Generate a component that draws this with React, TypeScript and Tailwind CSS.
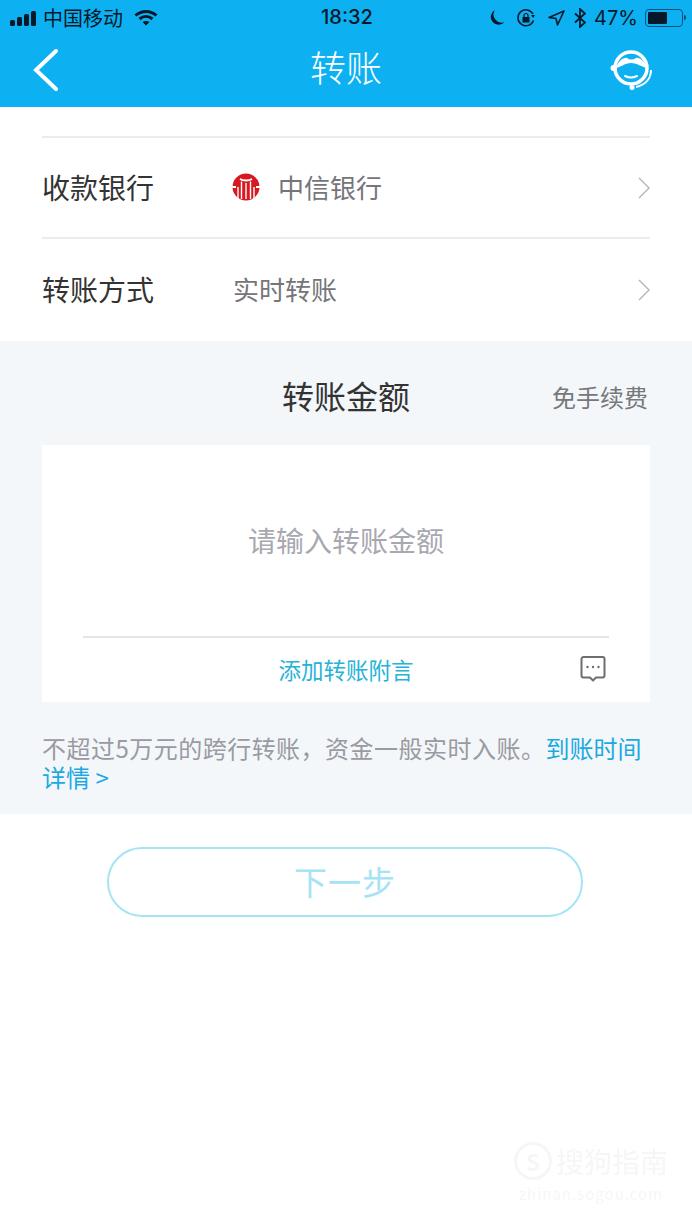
const CJK = "font-['Noto_Sans_CJK_SC','Noto_Sans',sans-serif]";

function Chevron() {
  return (
    <svg width="14" height="24" viewBox="0 0 14 24" fill="none" stroke="#b4b4b8" strokeWidth="1.4" className="ml-auto translate-x-[1px] translate-y-[1px]">
      <path d="M2 2l10 10L2 22" />
    </svg>
  );
}

function StatusBar() {
  return (
    <div className="relative flex h-[35px] items-center pl-[10px] pr-[6px] text-[#06192b]">
      <svg width="28" height="16" viewBox="0 0 28 16" fill="currentColor">
        <rect x="0" y="10" width="5" height="6" rx="1.5" />
        <rect x="7" y="7" width="5" height="9" rx="1.5" />
        <rect x="14" y="4" width="5" height="12" rx="1.5" />
        <rect x="21" y="1" width="5" height="15" rx="1.5" />
      </svg>
      <span className="ml-[5px] text-[20px] leading-none">中国移动</span>
      <svg width="24" height="17" viewBox="0 0 24 17" className="ml-[11px]" fill="none" stroke="currentColor" strokeWidth="3">
        <path d="M1.5 6.500C7.500 1 16.500 1 22.500 6.500" />
        <path d="M5.500 10C9.500 6.500 14.500 6.500 18.500 10" />
        <path d="M12 16.500l-3.500-3.500c2-1.500 5-1.500 7 0z" fill="currentColor" stroke="none" />
      </svg>
      <span className="absolute left-[321px] top-[5px] font-['Inter',sans-serif] text-[20px] font-medium leading-[24px]">18:32</span>
      <div className="ml-auto flex items-center">
        <svg width="16" height="17" viewBox="0 0 16 17" fill="currentColor">
          <path d="M6 1a8 8 0 0 0 9.500 12A7.800 7.800 0 1 1 6 1z" />
        </svg>
        <svg width="20" height="20" viewBox="0 0 20 20" className="ml-[11px]" fill="none" stroke="currentColor" strokeWidth="1.5">
          <path d="M17.500 12.500A8 8 0 1 1 17 6" />
          <path d="M15 7h4l-2 3z" fill="currentColor" stroke="none" />
          <rect x="6.500" y="9" width="7" height="5.500" fill="currentColor" stroke="none" />
          <path d="M8 9V7.500a2 2 0 0 1 4 0V9" strokeWidth="1.2" />
        </svg>
        <svg width="17" height="16" viewBox="0 0 17 16" className="ml-[12px]" fill="none" stroke="currentColor" strokeWidth="1.6" strokeLinejoin="round">
          <path d="M16 1L1 7.500l7 1 1.500 6.500z" />
        </svg>
        <svg width="12" height="20" viewBox="0 0 12 20" className="ml-[9px]" fill="none" stroke="currentColor" strokeWidth="1.8">
          <path d="M1 5.500l10 9L6 19V1l5 4.500-10 9" />
        </svg>
        <span className="ml-[8px] font-['Inter',sans-serif] text-[20px] leading-none">47%</span>
        <div className="ml-[7px] flex h-[18px] w-[38px] items-center rounded-[4px] border border-[#0a4f78] p-[2px]">
          <div className="h-full w-[19px] rounded-[1px] bg-[#06192b]" />
        </div>
        <div className="ml-px h-[5px] w-[2px] rounded-r-sm bg-[#0a4f78]" />
      </div>
    </div>
  );
}

function NavBar() {
  return (
    <div className="relative flex h-[72px] items-start justify-center">
      <svg width="28" height="44" viewBox="0 0 28 44" fill="none" stroke="white" strokeWidth="4" strokeLinecap="round" className="absolute left-[32px] top-[13px]">
        <path d="M24 3L4 22l20 19" />
      </svg>
      <span className="mt-[9px] text-[36px] font-light leading-[44px] text-white">转账</span>
      <svg width="44" height="44" viewBox="0 0 44 44" fill="none" stroke="white" className="absolute left-[610px] top-[13px]">
        <circle cx="21" cy="20" r="16" strokeWidth="3.5" />
        <path d="M6 20c2-7 8-11 11-10 3 2 6 2 9 0 3-1 9 3 11 10-5-1-10-5-16-5S11 19 6 20z" fill="white" stroke="none" />
        <path d="M15 28c4 2 8 2 12 0" strokeWidth="2" strokeLinecap="round" />
        <path d="M41 22c0 9-6 15-15 17" strokeWidth="2" />
        <circle cx="22" cy="39.500" r="2.500" fill="white" stroke="none" />
        <circle cx="3.500" cy="20" r="3" fill="white" stroke="none" />
      </svg>
    </div>
  );
}

function BankLogo() {
  return (
    <svg width="28" height="28" viewBox="0 0 28 28" className="shrink-0 -translate-x-[1px]">
      <circle cx="14" cy="14" r="13.500" fill="#d81920" />
      <path d="M9.500 26V8.500M14 26V10M18.500 26V8.500M6 26V14M22 26V14" stroke="white" strokeWidth="1.4" fill="none" />
      <path d="M8 6c3 2 9 2 12 0" stroke="white" strokeWidth="1.8" fill="none" />
      <path d="M0 14h4M24 14h4" stroke="white" strokeWidth="2" fill="none" />
    </svg>
  );
}

export default function App() {
  return (
    <div className={`${CJK} relative flex h-[1230px] w-[692px] flex-col overflow-hidden bg-white`}>
      <header className="h-[107px] shrink-0 bg-[#0db1f2]">
        <StatusBar />
        <NavBar />
      </header>

      <section className="mx-[42px] mt-[29px] shrink-0 border-t-2 border-[#ececec]">
        <div className="flex h-[101px] items-center border-b-2 border-[#ececec] pb-[2px]">
          <span className="w-[191px] text-[28px] text-[#333333]">收款银行</span>
          <BankLogo />
          <span className="ml-[17px] text-[26px] text-[#75757a]">中信银行</span>
          <Chevron />
        </div>
        <div className="flex h-[102px] items-center pb-[3px]">
          <span className="w-[191px] text-[28px] text-[#333333]">转账方式</span>
          <span className="text-[26px] text-[#75757a]">实时转账</span>
          <Chevron />
        </div>
      </section>

      <section className="flex h-[473px] shrink-0 flex-col bg-[#f3f7fa] px-[42px]">
        <div className="relative flex h-[104px] shrink-0 items-center justify-center pt-[4px]">
          <span className="text-[32px] text-[#333333]">转账金额</span>
          <span className="absolute right-[2px] top-[36px] text-[24px] leading-[40px] text-[#77777c]">免手续费</span>
        </div>
        <div className="flex h-[257px] shrink-0 flex-col bg-white px-[41px]">
          <div className="flex h-[193px] shrink-0 items-center justify-center border-b-2 border-[#e6e6e6] pb-[1px] text-[28px] text-[#a8a8b0]">
            请输入转账金额
          </div>
          <div className="relative flex flex-1 items-center justify-center">
            <span className="text-[22.5px] text-[#25b3d8]">添加转账附言</span>
            <svg width="28" height="28" viewBox="0 0 28 28" fill="none" stroke="#6e6e72" strokeWidth="2" className="absolute right-[2px] top-[17px]">
              <path d="M4.500 2h19a2 2 0 0 1 2 2v16.500a2 2 0 0 1-2 2H17L14 25.500 11 22.500H4.500a2 2 0 0 1-2-2V4a2 2 0 0 1 2-2z" strokeLinejoin="round" />
              <circle cx="8.500" cy="12" r="1.200" fill="#6e6e72" stroke="none" />
              <circle cx="14" cy="12" r="1.200" fill="#6e6e72" stroke="none" />
              <circle cx="19.500" cy="12" r="1.200" fill="#6e6e72" stroke="none" />
            </svg>
          </div>
        </div>
        <p className="mt-[31px] text-[24px] leading-[29px] text-[#9a9aa2]">
          <span className="tracking-[0.48px]">不超过5万元的跨行转账，资金一般实时入账。</span>
          <span className="text-[#1da8e2]">到账时间详情 &gt;</span>
        </p>
      </section>

      <div className="ml-[107px] mt-[33px] flex h-[70px] w-[476px] shrink-0 items-center justify-center rounded-[35px] border-2 border-[#a5e3f5] text-[33px] tracking-[1px] text-[#a5e3f5]">
        下一步
      </div>

      <div className="pointer-events-none absolute left-[514px] top-[1142px] flex flex-col items-center text-[#f6f6f6] blur-[0.6px]">
        <div className="flex items-center">
          <div className="flex h-[38px] w-[38px] items-center justify-center rounded-full border-[3px] border-[#f6f6f6] text-[22px] font-bold leading-none">S</div>
          <span className="ml-[4px] text-[28px] leading-none">搜狗指南</span>
        </div>
        <span className="mt-[6px] text-[15px] leading-none tracking-[1px]">zhinan.sogou.com</span>
      </div>
    </div>
  );
}
